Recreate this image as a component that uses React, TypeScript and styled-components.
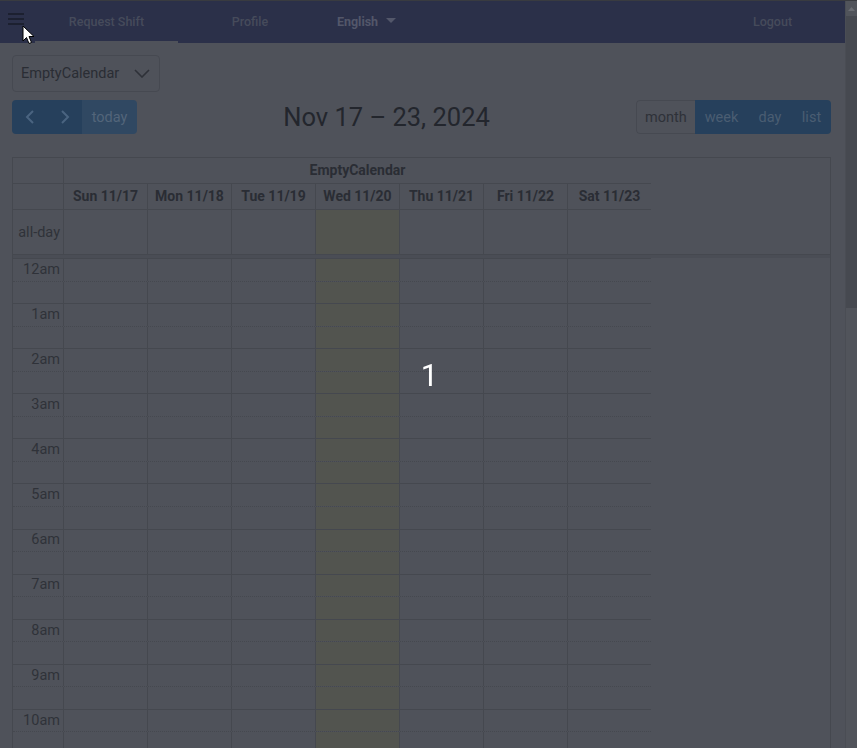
import React from "react";
import styled, { createGlobalStyle } from "styled-components";

const C = {
  bg: "#4f525a",
  line: "#45484f",
  nav: "#2b3049",
  navText: "#464b5b",
  blue: "#26405c",
  blueDim: "#304862",
  btnText: "#4a5d72",
  dark: "#2a2d34",
  today: "#52544f",
};

const Global = createGlobalStyle`
  html, body { margin: 0; padding: 0; background: ${C.bg}; }
  body { font-family: Roboto, "Noto Sans", sans-serif; overflow: hidden; }
  * { box-sizing: border-box; }
`;

const Shell = styled.div`
  display: flex;
  height: 100vh;
  border-top: 1px solid #393b40;
  overflow: hidden;
`;

const Main = styled.div`
  flex: 1;
  min-width: 0;
  display: flex;
  flex-direction: column;
  overflow: hidden;
`;

const Scrollbar = styled.div`
  width: 12px;
  flex: none;
  background: #51545b;
  border-left: 1px solid #4a4d54;
  display: flex;
  flex-direction: column;
  align-items: center;
`;

const ScrollArrow = styled.div`
  height: 15px;
  width: 100%;
  display: flex;
  align-items: center;
  justify-content: center;
`;

const ScrollThumb = styled.div`
  width: 100%;
  height: 292px;
  background: #464950;
`;

const NavBar = styled.nav`
  height: 42px;
  background: ${C.nav};
  display: flex;
  align-items: stretch;
  flex: none;
`;

const Burger = styled.div`
  width: 35px;
  display: flex;
  flex-direction: column;
  gap: 3px;
  padding: 12px 0 0 8px;
`;

const BurgerLine = styled.span`
  display: block;
  width: 16px;
  height: 2px;
  background: #1c2030;
`;

const NavTab = styled.div<{ $w: number; $active?: boolean }>`
  width: ${(p) => p.$w}px;
  display: flex;
  align-items: center;
  justify-content: center;
  font-size: 12.5px;
  font-weight: 500;
  color: ${C.navText};
  border-bottom: 2px solid ${(p) => (p.$active ? C.bg : "transparent")};
`;

const LangTab = styled(NavTab)`
  font-weight: 700;
  color: #53576a;
  gap: 8px;
`;

const Spacer = styled.div`
  flex: 1;
`;

const Content = styled.div`
  padding: 12px 14px 0 12px;
  display: flex;
  flex-direction: column;
`;

const Select = styled.div`
  width: 148px;
  height: 37px;
  border: 1px solid #464951;
  border-radius: 4px;
  display: flex;
  align-items: center;
  justify-content: space-between;
  padding: 0 9px 0 8px;
  font-size: 14.5px;
  color: ${C.dark};
`;

const Toolbar = styled.div`
  margin-top: 8px;
  height: 34px;
  display: flex;
  align-items: center;
  justify-content: space-between;
`;

const BtnGroup = styled.div`
  display: flex;
  height: 34px;
  border-radius: 4px;
  overflow: hidden;
`;

const Btn = styled.div<{ $variant: "blue" | "dim" | "plain"; $w: number }>`
  width: ${(p) => p.$w}px;
  display: flex;
  align-items: center;
  justify-content: center;
  font-size: 14.5px;
  background: ${(p) =>
    p.$variant === "blue" ? C.blue : p.$variant === "dim" ? C.blueDim : "transparent"};
  color: ${(p) => (p.$variant === "plain" ? "#2e3138" : p.$variant === "dim" ? "#53657a" : C.btnText)};
  border: ${(p) => (p.$variant === "plain" ? `1px solid #464951` : "none")};
  border-right: ${(p) => (p.$variant === "plain" ? "none" : undefined)};
  border-radius: ${(p) => (p.$variant === "plain" ? "4px 0 0 4px" : "0")};
`;

const Title = styled.h2`
  margin: 0;
  font-size: 25.5px;
  font-weight: 400;
  color: #23262d;
`;

const Calendar = styled.div`
  margin-top: 23px;
  border: 1px solid ${C.line};
  border-bottom: none;
  display: flex;
  flex-direction: column;
`;

const HeadRow = styled.div`
  display: grid;
  grid-template-columns: 50px repeat(7, 84px);
  height: 26px;
`;

const HeadCell = styled.div<{ $span?: number; $axis?: boolean }>`
  grid-column: span ${(p) => p.$span ?? 1};
  border-bottom: 1px solid ${C.line};
  border-left: ${(p) => (p.$axis ? "none" : `1px solid ${C.line}`)};
  display: flex;
  align-items: center;
  justify-content: center;
  font-size: 14px;
  font-weight: 700;
  color: ${C.dark};
  padding-bottom: 1px;
`;

const AllDayRow = styled.div`
  display: grid;
  grid-template-columns: 50px repeat(6, 84px) 1fr;
  height: 45px;
  border-bottom: 1px solid ${C.line};
`;

const AxisCell = styled.div`
  display: flex;
  align-items: center;
  justify-content: flex-end;
  padding-right: 3px;
  font-size: 14.5px;
  color: #2f3239;
`;

const DayCell = styled.div<{ $today?: boolean }>`
  border-left: 1px solid ${C.line};
  background: ${(p) => (p.$today ? C.today : "transparent")};
`;

const Divider = styled.div`
  height: 3px;
  background: #4a4d55;
`;

const TimeGrid = styled.div`
  display: flex;
  flex-direction: column;
`;

const SlotRow = styled.div<{ $minor?: boolean }>`
  display: grid;
  grid-template-columns: 50px repeat(7, 84px);
  width: 638px;
  height: 22.55px;
  flex: none;
  border-top: 1px ${(p) => (p.$minor ? "dotted" : "solid")} ${C.line};
`;

const SlotLabel = styled.div`
  display: flex;
  align-items: center;
  justify-content: flex-end;
  padding: 0 3px 1px 0;
  font-size: 14.5px;
  color: #2f3239;
`;

const Overlay = styled.div`
  position: fixed;
  inset: 0;
  display: flex;
  align-items: center;
  justify-content: center;
  pointer-events: none;
  padding-left: 2px;
  padding-top: 2px;
`;

const Count = styled.div`
  font-size: 31px;
  color: #ffffff;
  font-weight: 400;
`;

const Cursor = styled.svg`
  position: fixed;
  left: 22px;
  top: 25px;
`;

const days = ["Sun 11/17", "Mon 11/18", "Tue 11/19", "Wed 11/20", "Thu 11/21", "Fri 11/22", "Sat 11/23"];
const hours = ["12am", "1am", "2am", "3am", "4am", "5am", "6am", "7am", "8am", "9am", "10am"];

const Chevron = ({ dir }: { dir: "l" | "r" }) => (
  <svg width="10" height="14" viewBox="0 0 10 14">
    <polyline
      points={dir === "l" ? "8,1 2,7 8,13" : "2,1 8,7 2,13"}
      fill="none"
      stroke="#4a6480"
      strokeWidth="2"
    />
  </svg>
);

export default function App() {
  return (
    <>
      <Global />
      <Shell>
        <Main>
          <NavBar>
            <Burger>
              <BurgerLine />
              <BurgerLine />
              <BurgerLine />
            </Burger>
            <NavTab $w={143} $active>
              Request Shift
            </NavTab>
            <NavTab $w={144}>Profile</NavTab>
            <LangTab $w={89}>
              English
              <svg width="10" height="6" viewBox="0 0 10 6">
                <polygon points="0,0 10,0 5,5" fill="#53576a" />
              </svg>
            </LangTab>
            <Spacer />
            <NavTab $w={145}>Logout</NavTab>
          </NavBar>
          <Content>
            <Select>
              EmptyCalendar
              <svg width="16" height="9" viewBox="0 0 16 9">
                <polyline points="1,1 8,8 15,1" fill="none" stroke="#2e3138" strokeWidth="1.6" />
              </svg>
            </Select>
            <Toolbar>
              <BtnGroup>
                <Btn $variant="blue" $w={35}>
                  <Chevron dir="l" />
                </Btn>
                <Btn $variant="blue" $w={35}>
                  <Chevron dir="r" />
                </Btn>
                <Btn $variant="dim" $w={55}>
                  today
                </Btn>
              </BtnGroup>
              <Title>Nov 17 – 23, 2024</Title>
              <BtnGroup>
                <Btn $variant="plain" $w={59}>
                  month
                </Btn>
                <Btn $variant="blue" $w={53}>
                  week
                </Btn>
                <Btn $variant="blue" $w={44}>
                  day
                </Btn>
                <Btn $variant="blue" $w={39}>
                  list
                </Btn>
              </BtnGroup>
            </Toolbar>
            <Calendar>
              <HeadRow>
                <HeadCell $axis />
                <HeadCell $span={7}>EmptyCalendar</HeadCell>
              </HeadRow>
              <HeadRow>
                <HeadCell $axis />
                {days.map((d) => (
                  <HeadCell key={d}>{d}</HeadCell>
                ))}
              </HeadRow>
              <AllDayRow>
                <AxisCell>all-day</AxisCell>
                {days.map((d, i) => (
                  <DayCell key={d} $today={i === 3} />
                ))}
              </AllDayRow>
              <Divider />
              <TimeGrid>
                {hours.map((h) => (
                  <React.Fragment key={h}>
                    <SlotRow>
                      <SlotLabel>{h}</SlotLabel>
                      {days.map((d, i) => (
                        <DayCell key={d} $today={i === 3} />
                      ))}
                    </SlotRow>
                    <SlotRow $minor>
                      <SlotLabel />
                      {days.map((d, i) => (
                        <DayCell key={d} $today={i === 3} />
                      ))}
                    </SlotRow>
                  </React.Fragment>
                ))}
              </TimeGrid>
            </Calendar>
          </Content>
        </Main>
        <Scrollbar>
          <ScrollArrow>
            <svg width="7" height="4" viewBox="0 0 7 4">
              <polygon points="0,4 7,4 3.5,0" fill="#6a6d73" />
            </svg>
          </ScrollArrow>
          <ScrollThumb />
        </Scrollbar>
      </Shell>
      <Overlay>
        <Count>1</Count>
      </Overlay>
      <Cursor width="13" height="20" viewBox="0 0 13 20">
        <path d="M1 1 L1 16 L4.5 12.5 L7 18.5 L9.5 17.5 L7 11.5 L12 11.5 Z" fill="#ffffff" stroke="#000000" strokeWidth="1" strokeLinejoin="round" />
      </Cursor>
    </>
  );
}
